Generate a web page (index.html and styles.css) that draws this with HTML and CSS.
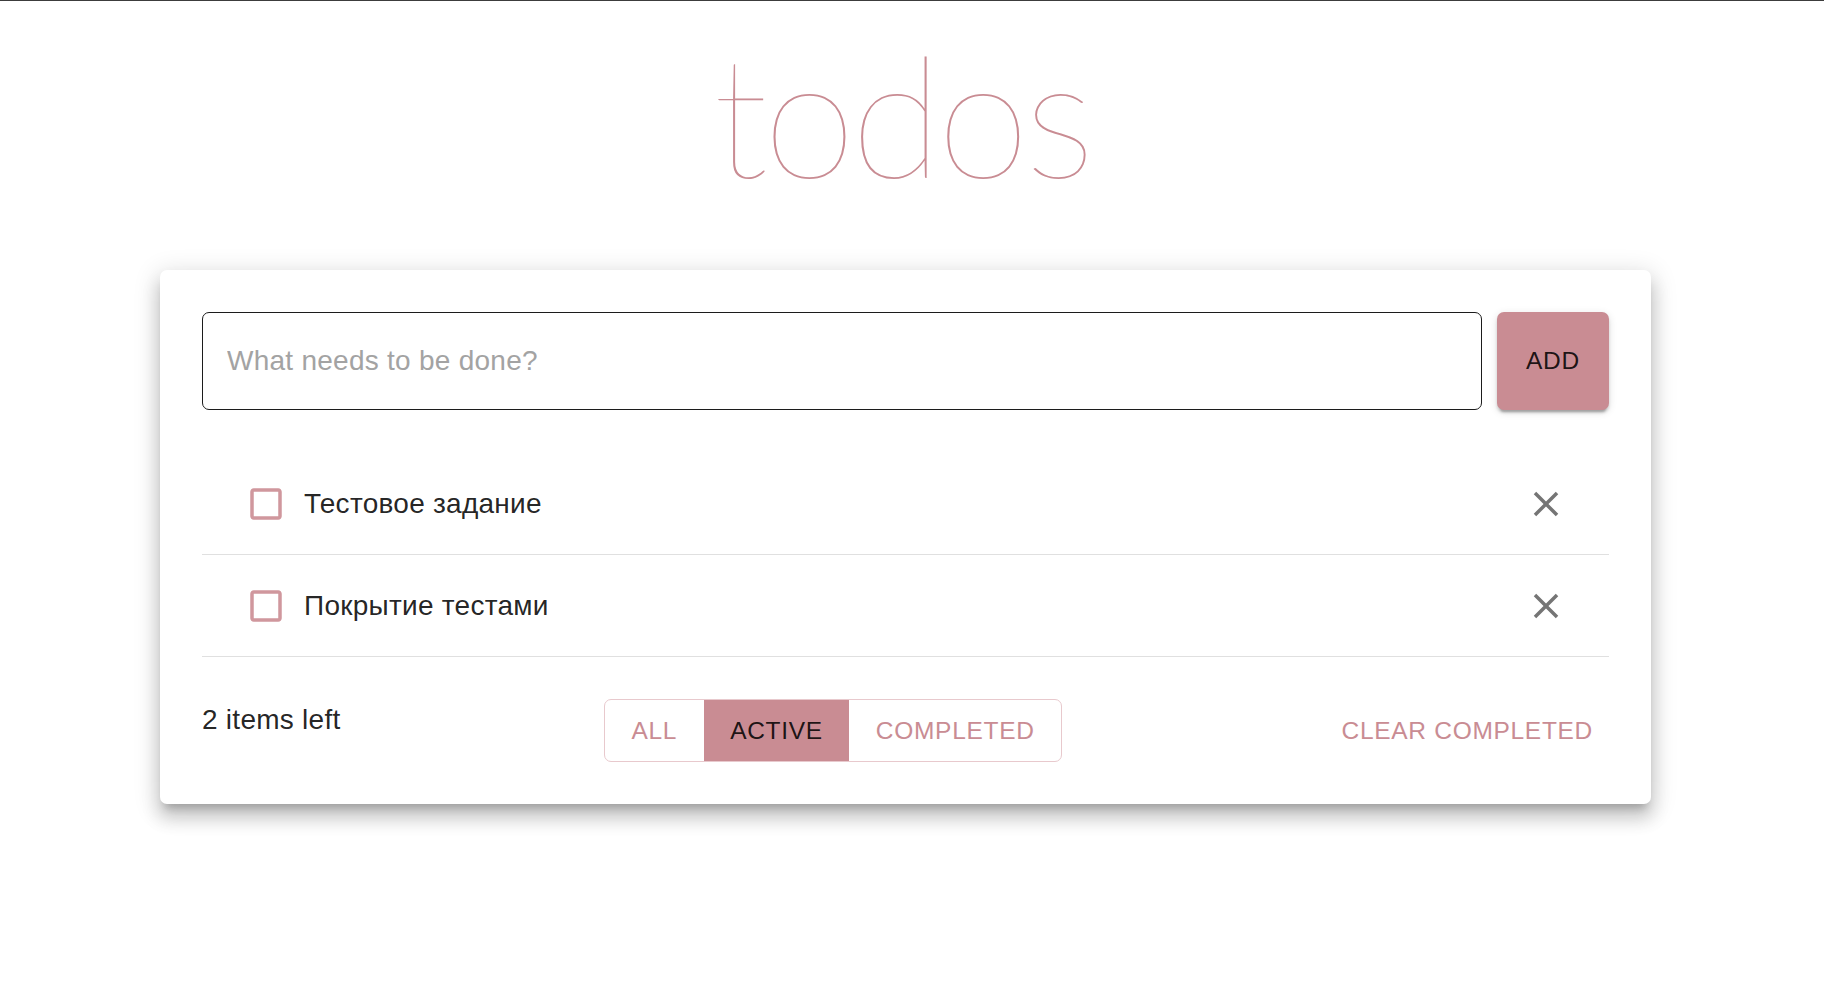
FILE: index.html
```html
<!DOCTYPE html>
<html lang="ru">
<head>
<meta charset="utf-8">
<title>todos</title>
<link rel="stylesheet" href="styles.css">
</head>
<body>
<div class="app">
  <h1 class="title">todos</h1>
  <div class="card">
    <form class="new-todo">
      <input class="new-todo-input" type="text" placeholder="What needs to be done?">
      <button class="add-btn" type="button">ADD</button>
    </form>
    <ul class="todo-list">
      <li class="todo-item">
        <svg class="checkbox" viewBox="0 0 24 24"><path d="M19 5v14H5V5h14m0-2H5c-1.11 0-2 .9-2 2v14c0 1.1.89 2 2 2h14c1.1 0 2-.9 2-2V5c0-1.1-.9-2-2-2z"/></svg>
        <span class="todo-text">Тестовое задание</span>
        <svg class="close" viewBox="0 0 24 24"><path d="M19 6.41 17.59 5 12 10.59 6.41 5 5 6.41 10.59 12 5 17.59 6.41 19 12 13.41 17.59 19 19 17.59 13.41 12z"/></svg>
      </li>
      <li class="todo-item">
        <svg class="checkbox" viewBox="0 0 24 24"><path d="M19 5v14H5V5h14m0-2H5c-1.11 0-2 .9-2 2v14c0 1.1.89 2 2 2h14c1.1 0 2-.9 2-2V5c0-1.1-.9-2-2-2z"/></svg>
        <span class="todo-text">Покрытие тестами</span>
        <svg class="close" viewBox="0 0 24 24"><path d="M19 6.41 17.59 5 12 10.59 6.41 5 5 6.41 10.59 12 5 17.59 6.41 19 12 13.41 17.59 19 19 17.59 13.41 12z"/></svg>
      </li>
    </ul>
    <div class="footer">
      <span class="count">2 items left</span>
      <div class="filters">
        <button class="filter" type="button">ALL</button>
        <button class="filter selected" type="button">ACTIVE</button>
        <button class="filter" type="button">COMPLETED</button>
      </div>
      <button class="clear-btn" type="button">CLEAR COMPLETED</button>
    </div>
  </div>
</div>
</body>
</html>
```
FILE: styles.css
```css
* { box-sizing: border-box; }

html, body {
  margin: 0;
  padding: 0;
  background: #fff;
}

body {
  min-height: 100vh;
  border-top: 1px solid #3c3c3c;
  font-family: "Liberation Sans", Arial, sans-serif;
  color: rgba(0, 0, 0, 0.87);
}

.app {
  width: 1811px;
  padding-bottom: 120px;
}

.title {
  margin: 28px 0 0;
  padding-right: 8px;
  font-family: Lato, "Liberation Sans", sans-serif;
  font-weight: 100;
  font-size: 168px;
  line-height: 168px;
  letter-spacing: -5px;
  color: #c98c93;
  text-align: center;
}

.card {
  width: 1491px;
  margin: 73px auto 0;
  padding: 42px;
  background: #fff;
  border-radius: 7px;
  box-shadow: 0 9px 9px -5px rgba(0,0,0,0.2), 0 14px 17px 2px rgba(0,0,0,0.14), 0 5px 24px 4px rgba(0,0,0,0.12);
}

.new-todo {
  display: flex;
  gap: 15px;
  margin: 0;
}

.new-todo-input {
  flex: 1;
  height: 98px;
  border: 1px solid #1c1c1c;
  border-radius: 7px;
  padding: 0 24px;
  font-family: "Liberation Sans", Arial, sans-serif;
  font-size: 28px;
  letter-spacing: 0.26px;
  color: rgba(0,0,0,0.87);
  outline: none;
}

.new-todo-input::placeholder {
  color: #a3a3a3;
}

.add-btn {
  width: 112px;
  height: 98px;
  border: 0;
  border-radius: 7px;
  background: #c98c93;
  font-family: "Liberation Sans", Arial, sans-serif;
  font-size: 24.5px;
  letter-spacing: 0.7px;
  color: rgba(0,0,0,0.87);
  box-shadow: 0 5px 2px -3px rgba(0,0,0,0.2), 0 3px 3px 0 rgba(0,0,0,0.14), 0 2px 9px 0 rgba(0,0,0,0.12);
  cursor: pointer;
}

.todo-list {
  list-style: none;
  margin: 43px 0 0;
  padding: 0;
}

.todo-item {
  display: flex;
  align-items: center;
  height: 102px;
  padding: 0 42px 0 43px;
  border-bottom: 1px solid #e0e0e0;
}

.checkbox {
  width: 42px;
  height: 42px;
  fill: #d0979d;
  flex: none;
}

.todo-text {
  flex: 1;
  margin-left: 17px;
  font-size: 28px;
  letter-spacing: 0.26px;
}

.close {
  width: 42px;
  height: 42px;
  fill: #757575;
  flex: none;
}

.footer {
  display: flex;
  justify-content: space-between;
  align-items: flex-start;
  margin-top: 42px;
}

.count {
  font-size: 28px;
  line-height: 42px;
  letter-spacing: 0.26px;
}

.filters {
  display: flex;
  height: 63px;
  border: 1px solid #e8c9cd;
  border-radius: 7px;
  overflow: hidden;
}

.filter {
  border: 0;
  background: transparent;
  padding: 0 26.5px;
  font-family: "Liberation Sans", Arial, sans-serif;
  font-size: 24.5px;
  letter-spacing: 0.7px;
  color: #c98c93;
  cursor: pointer;
}

.filter.selected {
  background: #c98c93;
  color: rgba(0,0,0,0.87);
}

.clear-btn {
  height: 63px;
  border: 0;
  background: transparent;
  padding: 0 16px;
  font-family: "Liberation Sans", Arial, sans-serif;
  font-size: 24.5px;
  letter-spacing: 0.7px;
  color: #c98c93;
  cursor: pointer;
}
```
